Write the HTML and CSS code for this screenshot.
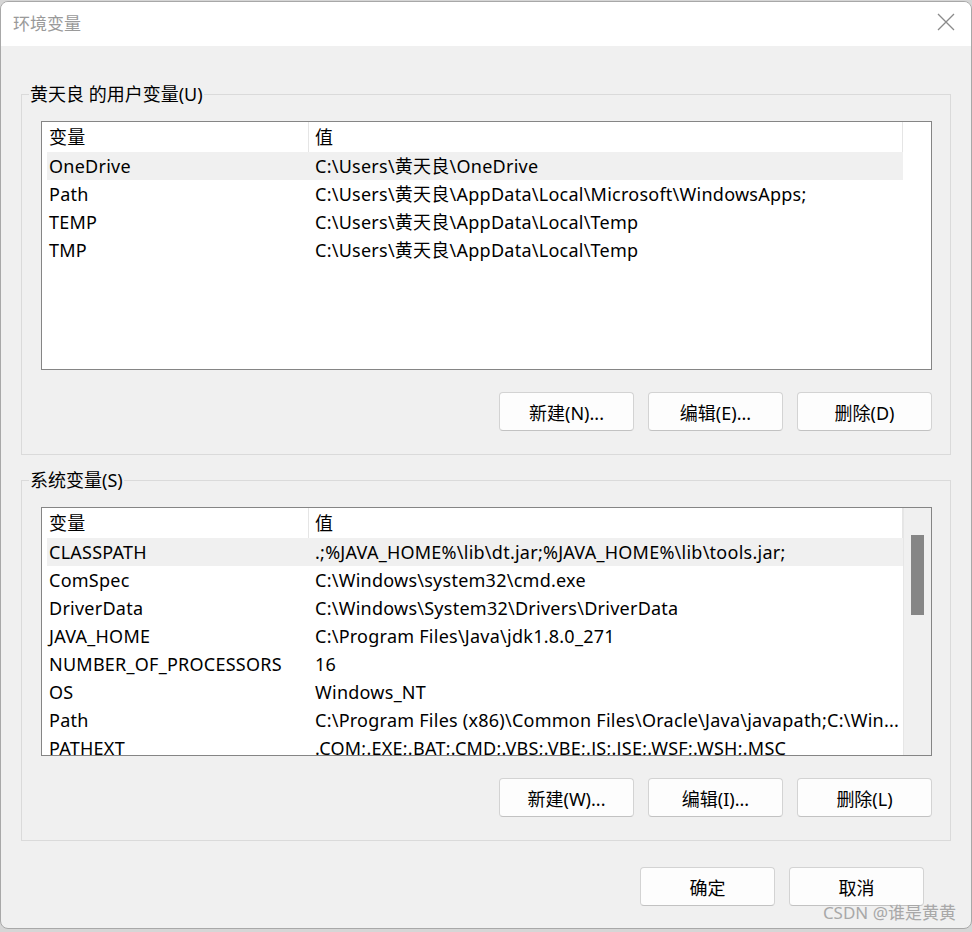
FILE: index.html
```html
<!DOCTYPE html>
<html lang="zh-CN">
<head>
<meta charset="utf-8">
<title>环境变量</title>
<link rel="stylesheet" href="styles.css">
</head>
<body>
<div class="window">
  <div class="titlebar">
    <span class="title">环境变量</span>
    <svg class="close" width="18" height="18" viewBox="0 0 18 18"><path d="M1 1 L17 17 M17 1 L1 17" stroke="#8a8a8a" stroke-width="1.3" fill="none"/></svg>
  </div>
  <div class="content">
    <fieldset class="group">
      <legend>黄天良 的用户变量(U)</legend>
      <div class="group-body">
        <div class="list">
          <div class="list-main">
            <div class="row header"><div class="c1">变量</div><div class="c2">值</div></div>
            <div class="row sel"><div class="c1">OneDrive</div><div class="c2">C:\Users\黄天良\OneDrive</div></div>
            <div class="row"><div class="c1">Path</div><div class="c2">C:\Users\黄天良\AppData\Local\Microsoft\WindowsApps;</div></div>
            <div class="row"><div class="c1">TEMP</div><div class="c2">C:\Users\黄天良\AppData\Local\Temp</div></div>
            <div class="row"><div class="c1">TMP</div><div class="c2">C:\Users\黄天良\AppData\Local\Temp</div></div>
          </div>
          <div class="side"></div>
        </div>
        <div class="buttons">
          <button class="btn">新建(N)...</button>
          <button class="btn">编辑(E)...</button>
          <button class="btn">删除(D)</button>
        </div>
      </div>
    </fieldset>
    <fieldset class="group second">
      <legend>系统变量(S)</legend>
      <div class="group-body">
        <div class="list">
          <div class="list-main">
            <div class="row header"><div class="c1">变量</div><div class="c2">值</div></div>
            <div class="row sel"><div class="c1">CLASSPATH</div><div class="c2">.;%JAVA_HOME%\lib\dt.jar;%JAVA_HOME%\lib\tools.jar;</div></div>
            <div class="row"><div class="c1">ComSpec</div><div class="c2">C:\Windows\system32\cmd.exe</div></div>
            <div class="row"><div class="c1">DriverData</div><div class="c2">C:\Windows\System32\Drivers\DriverData</div></div>
            <div class="row"><div class="c1">JAVA_HOME</div><div class="c2">C:\Program Files\Java\jdk1.8.0_271</div></div>
            <div class="row"><div class="c1">NUMBER_OF_PROCESSORS</div><div class="c2">16</div></div>
            <div class="row"><div class="c1">OS</div><div class="c2">Windows_NT</div></div>
            <div class="row"><div class="c1">Path</div><div class="c2">C:\Program Files (x86)\Common Files\Oracle\Java\javapath;C:\Win...</div></div>
            <div class="row"><div class="c1">PATHEXT</div><div class="c2">.COM;.EXE;.BAT;.CMD;.VBS;.VBE;.JS;.JSE;.WSF;.WSH;.MSC</div></div>
          </div>
          <div class="side scrollbar"><div class="thumb"></div></div>
        </div>
        <div class="buttons">
          <button class="btn">新建(W)...</button>
          <button class="btn">编辑(I)...</button>
          <button class="btn">删除(L)</button>
        </div>
      </div>
    </fieldset>
    <div class="footer">
      <button class="btn">确定</button>
      <button class="btn">取消</button>
    </div>
  </div>
  <div class="watermark">CSDN @谁是黄黄</div>
</div>
</body>
</html>
```
FILE: styles.css
```css
* { box-sizing: border-box; }
html, body { margin: 0; padding: 0; }
body {
  width: 972px;
  height: 932px;
  background: #d6d6d6;
  font-family: "Noto Sans", "Noto Sans CJK SC", sans-serif;
  color: #000;
  overflow: hidden;
}
.window {
  position: relative;
  margin-top: 1px;
  width: 972px;
  height: 928px;
  background: #f0f0f0;
  border: 1px solid #a8a8a8;
  border-radius: 8px;
  overflow: hidden;
}
.titlebar {
  height: 44px;
  background: #fff;
  display: flex;
  align-items: center;
  justify-content: space-between;
  padding: 0 16px 4px 12px;
}
.title {
  font-size: 17px;
  color: #9a9a9a;
  font-family: "Noto Sans CJK SC", sans-serif;
}
.close { display: block; }
.content {
  padding: 36px 20px 0 20px;
}
.group {
  margin: 0;
  padding: 0;
  border: 1px solid #dadada;
  min-width: 0;
}
.group.second { margin-top: 13px; }
.group legend {
  font-size: 18px;
  line-height: 24px;
  padding: 0 1px;
  margin-left: 7px;
}
.group-body {
  padding: 15px 18px 23px 19px;
}
.list {
  height: 249px;
  border: 1px solid #858585;
  background: #fff;
  display: flex;
  overflow: hidden;
}
.list-main {
  flex: 1;
  padding-left: 5px;
  overflow: hidden;
}
.side {
  width: 28px;
  flex: none;
}
.scrollbar {
  background: #f0f0f0;
  border-left: 1px solid #e6e6e6;
  padding: 27px 7px 0 7px;
}
.thumb {
  height: 80px;
  background: #868686;
}
.row {
  display: grid;
  grid-template-columns: 262px 1fr;
  height: 28px;
  font-size: 18px;
  line-height: 28px;
  letter-spacing: 0.25px;
  white-space: nowrap;
}
.row.header {
  height: 30px;
  line-height: 30px;
}
.row.header .c1 { border-right: 1px solid #e5e5e5; }
.row.header .c2 { border-right: 1px solid #e5e5e5; }
.row.sel { background: #f0f0f0; }
.c1 { padding-left: 2px; overflow: hidden; }
.c2 { padding-left: 6px; overflow: hidden; }
.buttons {
  display: flex;
  justify-content: flex-end;
  gap: 14px;
  margin-top: 22px;
}
.btn {
  width: 135px;
  height: 39px;
  background: #fdfdfd;
  border: 1px solid #d3d3d3;
  border-bottom-color: #c2c2c2;
  border-radius: 4px;
  font-family: "Noto Sans", "Noto Sans CJK SC", sans-serif;
  font-size: 18px;
  color: #000;
  padding: 0;
}
.footer {
  display: flex;
  justify-content: flex-end;
  gap: 14px;
  margin-top: 26px;
  padding-right: 27px;
}
.watermark {
  position: absolute;
  right: 15px;
  bottom: 4px;
  font-size: 17px;
  color: #a8a8a8;
  font-family: "Noto Sans", "Noto Sans CJK SC", sans-serif;
}
```
